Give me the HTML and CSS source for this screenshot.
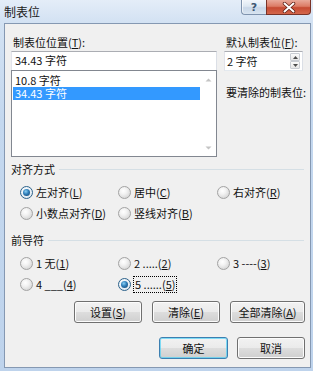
FILE: index.html
```html
<!DOCTYPE html>
<html lang="zh-CN">
<head>
<meta charset="utf-8">
<title>制表位</title>
<link rel="stylesheet" href="styles.css">
</head>
<body>
<div class="window">
  <div class="titlebar">
    <span class="title">制表位</span>
    <div class="caption">
      <div class="cbtn help">?</div>
      <div class="cbtn close">
        <svg width="14" height="11" viewBox="0 0 14 11"><path d="M2.5 1.5 L11.5 9.5 M11.5 1.5 L2.5 9.5" stroke="#5a1a10" stroke-width="3.4" stroke-linecap="round"/><path d="M2.5 1.5 L11.5 9.5 M11.5 1.5 L2.5 9.5" stroke="#ffffff" stroke-width="2" stroke-linecap="round"/></svg>
      </div>
    </div>
  </div>
  <div class="client">
    <div class="top">
      <div class="col">
        <div class="label">制表位位置(<u>T</u>):</div>
        <div class="textbox">34.43 字符</div>
        <div class="listbox">
          <div class="items">
            <div class="item">10.8 字符</div>
            <div class="item sel">34.43 字符</div>
          </div>
          <div class="vscroll">
            <svg width="7" height="4" viewBox="0 0 7 4"><path d="M0.5 3.5 L3.5 0.5 L6.5 3.5 Z" fill="#c4c4c4"/></svg>
            <svg width="7" height="4" viewBox="0 0 7 4"><path d="M0.5 0.5 L3.5 3.5 L6.5 0.5 Z" fill="#c4c4c4"/></svg>
          </div>
        </div>
      </div>
      <div class="col">
        <div class="label">默认制表位(<u>F</u>):</div>
        <div class="spin">
          <span class="spin-text">2 字符</span>
          <div class="spinbtns">
            <div class="sb"><svg width="5" height="3" viewBox="0 0 5 3"><path d="M0 3 L2.5 0 L5 3 Z" fill="#4d4d4d"/></svg></div>
            <div class="sb"><svg width="5" height="3" viewBox="0 0 5 3"><path d="M0 0 L2.5 3 L5 0 Z" fill="#4d4d4d"/></svg></div>
          </div>
        </div>
        <div class="label clear-label">要清除的制表位:</div>
      </div>
    </div>

    <div class="group-head"><span>对齐方式</span></div>
    <div class="radios align">
      <div class="opt"><span class="radio on"></span><span>左对齐(<u>L</u>)</span></div>
      <div class="opt"><span class="radio"></span><span>居中(<u>C</u>)</span></div>
      <div class="opt"><span class="radio"></span><span>右对齐(<u>R</u>)</span></div>
      <div class="opt"><span class="radio"></span><span>小数点对齐(<u>D</u>)</span></div>
      <div class="opt"><span class="radio"></span><span>竖线对齐(<u>B</u>)</span></div>
    </div>

    <div class="group-head lead-head"><span>前导符</span></div>
    <div class="radios leader">
      <div class="opt"><span class="radio"></span><span>1 无(<u>1</u>)</span></div>
      <div class="opt"><span class="radio"></span><span>2 .....(<u>2</u>)</span></div>
      <div class="opt"><span class="radio"></span><span>3 ----(<u>3</u>)</span></div>
      <div class="opt"><span class="radio"></span><span>4 ___(<u>4</u>)</span></div>
      <div class="opt"><span class="radio on"></span><span class="focus">5 ......(<u>5</u>)</span></div>
    </div>

    <div class="btnrow row1">
      <div class="btn w68">设置(<u>S</u>)</div>
      <div class="btn w68">清除(<u>E</u>)</div>
      <div class="btn w75">全部清除(<u>A</u>)</div>
    </div>
    <div class="btnrow row2">
      <div class="btn default w69">确定</div>
      <div class="btn w68">取消</div>
    </div>
  </div>
</div>
</body>
</html>
```
FILE: styles.css
```css
html, body {
  margin: 0;
  padding: 0;
}
body {
  width: 313px;
  height: 371px;
  overflow: hidden;
  background: linear-gradient(180deg, #e4edf8 0px, #d3e2f3 22px, #c4d8ef 120px, #bed3ec 100%);
  font-family: "Noto Sans CJK SC", "Noto Sans", sans-serif;
  font-size: 11px;
  color: #111;
}
u { text-decoration: underline; text-underline-offset: 1px; }

.window {
  box-sizing: border-box;
  height: 371px;
  display: flex;
  flex-direction: column;
  padding: 0 2px 3px 4px;
}
.titlebar {
  height: 23px;
  display: flex;
  align-items: flex-start;
  flex-shrink: 0;
}
.title {
  margin-top: 4px;
  font-size: 12px;
  line-height: 16px;
  color: #1a1a1a;
}
.caption {
  margin-left: auto;
  display: flex;
}
.cbtn {
  box-sizing: border-box;
  height: 15px;
  display: flex;
  align-items: center;
  justify-content: center;
}
.help {
  width: 25px;
  border: 1px solid #7f93ae;
  border-top: none;
  border-right: none;
  border-radius: 0 0 0 4px;
  background: linear-gradient(180deg, #f2f6fb 0%, #dde7f2 45%, #c9d7e8 55%, #d8e4f1 100%);
  color: #3d5673;
  font-family: "DejaVu Sans", sans-serif;
  font-weight: bold;
  font-size: 11px;
  line-height: 13px;
  box-shadow: inset 1px 0 0 #ffffffaa;
}
.close {
  width: 45px;
  border: 1px solid #7a3327;
  border-top: none;
  border-radius: 0 0 4px 0;
  background: linear-gradient(180deg, #e9a99a 0%, #dc7b65 45%, #c64a32 55%, #d4674c 100%);
}

.client {
  flex: 1;
  background: #f0f0f0;
  border: 1px solid #8598b2;
  padding: 10px 6px 0 6px;
}

.top {
  display: grid;
  grid-template-columns: 206px 79px;
  column-gap: 7px;
}
.col { display: flex; flex-direction: column; }
.label {
  line-height: 16px;
  height: 16px;
  padding-left: 2px;
  margin-bottom: 1px;
  white-space: nowrap;
}
.textbox {
  box-sizing: border-box;
  height: 19px;
  border: 1px solid #abadb3;
  border-bottom: none;
  border-right-color: #dbdfe6;
  border-left-color: #e2e3ea;
  background: #fff;
  padding-left: 3px;
  line-height: 17px;
}
.listbox {
  box-sizing: border-box;
  height: 87px;
  border: 1px solid #828790;
  background: #fff;
  display: flex;
}
.items {
  flex: 1;
  padding: 3px 0 0 1px;
}
.item {
  height: 13px;
  line-height: 13px;
  padding-left: 2px;
  white-space: nowrap;
}
.item.sel {
  background: #3399ff;
  color: #fff;
}
.vscroll {
  width: 16px;
  display: flex;
  flex-direction: column;
  align-items: center;
  justify-content: space-between;
  padding: 7px 0 6px;
}

.spin {
  box-sizing: border-box;
  height: 20px;
  border: 1px solid #abadb3;
  border-left-color: #e2e3ea;
  border-right-color: #dbdfe6;
  border-bottom-color: #e3e9ef;
  background: #fff;
  display: flex;
  align-items: stretch;
}
.spin-text {
  flex: 1;
  padding-left: 2px;
  line-height: 18px;
}
.spinbtns {
  width: 10px;
  margin: 1px 2px 1px 0;
  display: flex;
  flex-direction: column;
}
.sb {
  flex: 1;
  border: 1px solid #c9cdd3;
  border-radius: 1px;
  background: linear-gradient(180deg, #fbfbfb, #e6e6e6);
  display: flex;
  align-items: center;
  justify-content: center;
}
.clear-label { margin-top: 13px; }

.group-head {
  display: flex;
  align-items: center;
  margin-top: 4px;
  line-height: 16px;
  height: 16px;
}
.group-head::after {
  content: "";
  flex: 1;
  height: 0;
  border-top: 1px solid #d5dfe5;
  margin-left: 4px;
  margin-top: 1px;
}
.lead-head { margin-top: 8px; }

.radios {
  display: grid;
  grid-template-columns: 98px 99px auto;
  grid-auto-rows: 21px;
  padding-left: 9px;
  margin-top: 5px;
}
.opt {
  display: flex;
  align-items: center;
  white-space: nowrap;
}
.opt > span:last-child { margin-left: 3px; line-height: 15px; }
.radio {
  box-sizing: border-box;
  width: 13px;
  height: 13px;
  border-radius: 50%;
  border: 1px solid #a3a3a3;
  background: radial-gradient(circle at 40% 35%, #ffffff 0%, #f2f2f2 35%, #d9d9d9 75%, #cdcdcd 100%);
  flex-shrink: 0;
  display: flex;
  align-items: center;
  justify-content: center;
}
.radio.on {
  border-color: #2c628b;
  background: radial-gradient(circle at 40% 35%, #ffffff 0%, #eef4f9 40%, #d6e2ec 100%);
}
.radio.on::after {
  content: "";
  width: 7px;
  height: 7px;
  border-radius: 50%;
  background: radial-gradient(circle at 40% 35%, #8ad0f4 0%, #2d7cb8 45%, #163f66 100%);
}
.focus {
  outline: 1px dotted #000;
  outline-offset: 0;
  padding: 0 1px;
}

.btnrow {
  display: flex;
  justify-content: flex-end;
  margin-right: -1px;
}
.row1 { margin-top: 6px; gap: 10px; }
.row2 { margin-top: 14px; gap: 9px; }
.btn {
  box-sizing: border-box;
  height: 22px;
  border: 1px solid #707070;
  border-radius: 3px;
  background: linear-gradient(180deg, #f2f2f2 0%, #ebebeb 48%, #dddddd 52%, #cfcfcf 100%);
  box-shadow: inset 0 0 0 1px #fcfcfc;
  display: flex;
  align-items: center;
  justify-content: center;
  line-height: 16px;
  white-space: nowrap;
}
.btn.default {
  border-color: #3c7fb1;
  box-shadow: inset 0 0 0 1px #48d0f7aa;
}
.w68 { width: 68px; }
.w69 { width: 69px; }
.w75 { width: 75px; }
```
